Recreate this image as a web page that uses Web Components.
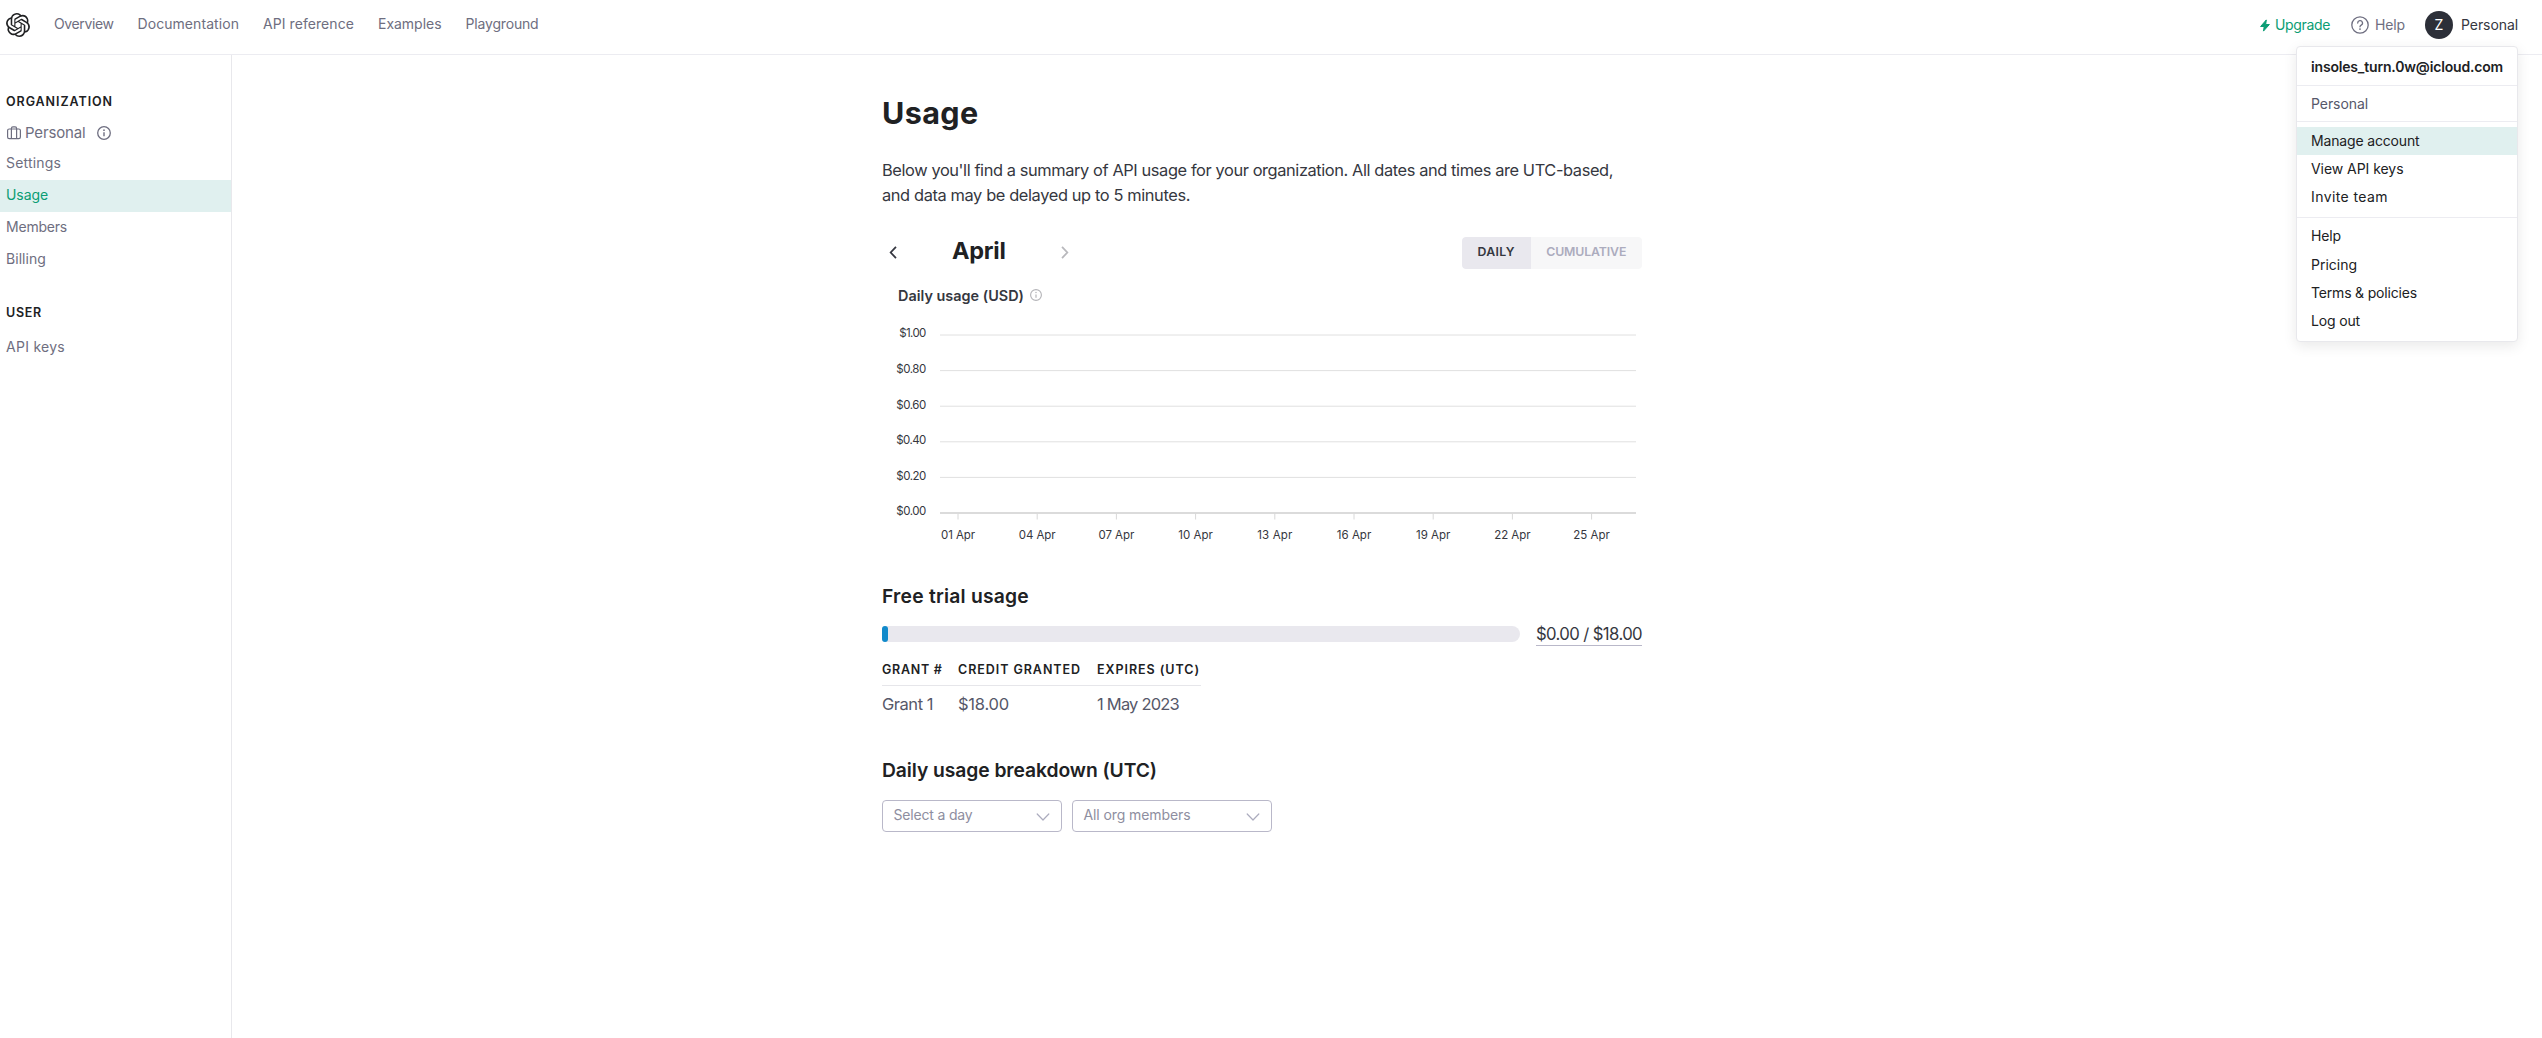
<!DOCTYPE html>
<html lang="en">
<head>
<meta charset="utf-8">
<title>Usage - OpenAI API</title>
<style>
html,body{margin:0;height:100%;overflow:hidden;background:#fff}
body{font-family:Inter,Roboto,"Liberation Sans",sans-serif;color:#353740}
</style>
</head>
<body>
<usage-app></usage-app>
<script>
function define(name, html, setup) {
  customElements.define(name, class extends HTMLElement {
    connectedCallback() {
      if (this.shadowRoot) return;
      const root = this.attachShadow({ mode: 'open' });
      root.innerHTML = html;
      if (setup) setup.call(this, root);
    }
  });
}

/* Text set to a given measure, in px, by tracking. */
define('fit-text', `<style>:host{display:inline-block;white-space:pre;flex:none}</style><slot></slot>`, function () {
  const w = parseFloat(this.getAttribute('w'));
  const n = this.textContent.length;
  this.style.width = 'max-content';
  const natural = this.getBoundingClientRect().width;
  this.style.letterSpacing = ((w - natural) / n).toFixed(4) + 'px';
  this.style.width = w + 'px';
});

const ICONS = {
  logo: ['0 0 24 24', '<path fill="#202123" d="M22.2819 9.8211a5.9847 5.9847 0 0 0-.5157-4.9108 6.0462 6.0462 0 0 0-6.5098-2.9A6.0651 6.0651 0 0 0 4.9807 4.1818a5.9847 5.9847 0 0 0-3.9977 2.9 6.0462 6.0462 0 0 0 .7427 7.0966 5.98 5.98 0 0 0 .511 4.9107 6.051 6.051 0 0 0 6.5146 2.9001A5.9847 5.9847 0 0 0 13.2599 24a6.0557 6.0557 0 0 0 5.7718-4.2058 5.9894 5.9894 0 0 0 3.9977-2.9001 6.0557 6.0557 0 0 0-.7475-7.0729zm-9.022 12.6081a4.4755 4.4755 0 0 1-2.8764-1.0408l.1419-.0804 4.7783-2.7582a.7948.7948 0 0 0 .3927-.6813v-6.7369l2.02 1.1686a.071.071 0 0 1 .038.052v5.5826a4.504 4.504 0 0 1-4.4945 4.4944zm-9.6607-4.1254a4.4708 4.4708 0 0 1-.5346-3.0137l.142.0852 4.783 2.7582a.7712.7712 0 0 0 .7806 0l5.8428-3.3685v2.3324a.0804.0804 0 0 1-.0332.0615L9.74 19.9502a4.4992 4.4992 0 0 1-6.1408-1.6464zM2.3408 7.8956a4.485 4.485 0 0 1 2.3655-1.9728V11.6a.7664.7664 0 0 0 .3879.6765l5.8144 3.3543-2.0201 1.1685a.0757.0757 0 0 1-.071 0l-4.8303-2.7865A4.504 4.504 0 0 1 2.3408 7.872zm16.5963 3.8558L13.1038 8.364 15.1192 7.2a.0757.0757 0 0 1 .071 0l4.8303 2.7913a4.4944 4.4944 0 0 1-.6765 8.1042v-5.6772a.79.79 0 0 0-.407-.667zm2.0107-3.0231l-.142-.0852-4.7735-2.7818a.7759.7759 0 0 0-.7854 0L9.409 9.2297V6.8974a.0662.0662 0 0 1 .0284-.0615l4.8303-2.7866a4.4992 4.4992 0 0 1 6.6802 4.66zM8.3065 12.863l-2.02-1.1638a.0804.0804 0 0 1-.038-.0567V6.0742a4.4992 4.4992 0 0 1 7.3757-3.4537l-.142.0805L8.704 5.459a.7948.7948 0 0 0-.3927.6813zm1.0976-2.3654l2.602-1.4998 2.6069 1.4998v2.9994l-2.5974 1.4997-2.6067-1.4997Z"/>'],
  bolt: ['0 0 10 13', '<path fill="currentColor" stroke="currentColor" stroke-width="1" stroke-linejoin="round" d="M6.3.9 .6 7.5H4.2L3.5 12.1 9.4 5.5H5.7Z"/>'],
  help: ['0 0 18 18', '<g fill="none" stroke="currentColor" stroke-width="1.3" stroke-linecap="round"><circle cx="9" cy="9" r="8.2"/><path d="M6.7 7.1a2.4 2.4 0 1 1 3.5 2.1c-.8.4-1.2.8-1.2 1.6"/></g><circle cx="9" cy="13.1" r=".9" fill="currentColor"/>'],
  info: ['0 0 14 14', '<circle cx="7" cy="7" r="6.3" fill="none" stroke="currentColor" stroke-width="1.3"/><path d="M7 6.3v4" stroke="currentColor" stroke-width="1.4"/><circle cx="7" cy="4.2" r=".85" fill="currentColor"/>'],
  brief: ['0 0 14 14', '<g fill="none" stroke="currentColor" stroke-width="1.2"><rect x=".6" y="3" width="12.8" height="9.7" rx="1.6"/><path d="M4.4 12.7V2.4a1.5 1.5 0 0 1 1.5-1.5h2.2a1.5 1.5 0 0 1 1.5 1.5V12.7"/></g>'],
  left: ['0 0 8 14', '<path fill="none" stroke="currentColor" stroke-width="1.9" d="M7.2 1 1.5 7l5.7 6"/>'],
  right: ['0 0 8 14', '<path fill="none" stroke="currentColor" stroke-width="1.9" d="M.8 1 6.5 7 .8 13"/>'],
  down: ['0 0 14 8', '<path fill="none" stroke="currentColor" stroke-width="1.2" stroke-linecap="round" stroke-linejoin="round" d="M1.2 1 7 7l5.8-6"/>']
};
define('ui-icon', `<style>:host{display:block;flex:none}svg{display:block;width:100%;height:100%;overflow:visible}</style>`, function (root) {
  const [box, body] = ICONS[this.getAttribute('name')];
  root.innerHTML += `<svg viewBox="${box}">${body}</svg>`;
  this.style.width = this.getAttribute('width') + 'px';
  this.style.height = this.getAttribute('height') + 'px';
});

define('top-nav', `<style>
:host{display:flex;box-sizing:border-box;height:55px;border-bottom:1px solid #ececf1;font-size:14px;color:#6e6e80;padding:0 24px 0 6px;align-items:flex-start}
nav{display:flex;gap:24px;margin:14px 0 0 24px;line-height:20px}
.logo{margin-top:13px}
.right{margin-left:auto;display:flex;align-items:center;height:50px;line-height:20px}
.up{color:#0b9d74;display:flex;align-items:center;gap:5px}
.help{display:flex;align-items:center;gap:6px;margin-left:21px}
.user{display:flex;align-items:center;gap:8px;margin-left:20px;color:#353740}
.av{width:28px;height:28px;border-radius:50%;background:#2c2f38;color:#fff;text-align:center;line-height:27px}
</style>
<ui-icon class="logo" name="logo" width="24" height="24"></ui-icon>
<nav><fit-text w="59.5">Overview</fit-text><fit-text w="101.5">Documentation</fit-text><fit-text w="91">API reference</fit-text><fit-text w="63.5">Examples</fit-text><fit-text w="73">Playground</fit-text></nav>
<div class="right">
<div class="up"><ui-icon name="bolt" width="10" height="13"></ui-icon><fit-text w="55">Upgrade</fit-text></div>
<div class="help"><ui-icon name="help" width="18" height="18"></ui-icon><fit-text w="30">Help</fit-text></div>
<div class="user"><div class="av">Z</div><fit-text w="57">Personal</fit-text></div>
</div>`);

define('side-item', `<style>
:host{display:flex;box-sizing:border-box;align-items:center;height:32px;padding:0 0 2px 6px;font-size:14px;line-height:20px;color:#6e6e80}
:host([active]){background:#e0f0ef;color:#0b9d74}
</style><slot></slot>`);

define('side-heading', `<style>:host{display:block;padding-left:6px;font-size:12.5px;font-weight:600;line-height:20px;color:#202123}</style><slot></slot>`);

define('side-bar', `<style>
:host{display:block;box-sizing:border-box;width:232px;border-right:1px solid #e8e8ec;padding-top:37px;flex:none}
.org{display:flex;align-items:center;height:22px;margin-top:10px;padding-left:6.5px;font-size:15px;line-height:22px;color:#6e6e80}
.org .n{margin-left:4.5px}
.org .i{margin-left:11px}
.list{margin-top:4px}
.u{margin-top:27px}
.k{margin-top:9px}
</style>
<side-heading><fit-text w="107">ORGANIZATION</fit-text></side-heading>
<div class="org"><ui-icon name="brief" width="14" height="14"></ui-icon><fit-text class="n" w="60.5">Personal</fit-text><ui-icon class="i" name="info" width="14" height="14"></ui-icon></div>
<div class="list">
<side-item><fit-text w="55">Settings</fit-text></side-item>
<side-item active><fit-text w="42">Usage</fit-text></side-item>
<side-item><fit-text w="61">Members</fit-text></side-item>
<side-item><fit-text w="40">Billing</fit-text></side-item>
</div>
<side-heading class="u"><fit-text w="36">USER</fit-text></side-heading>
<side-item class="k"><fit-text w="59">API keys</fit-text></side-item>`);

define('usage-chart', `<style>
:host{display:block;height:250px}
svg{display:block;overflow:visible}
text{font-family:Inter,Roboto,sans-serif;font-size:11.5px;fill:#353740}
</style>`, function (root) {
  let s = '';
  ['$1.00', '$0.80', '$0.60', '$0.40', '$0.20', '$0.00'].forEach((t, i) => {
    const y = 29 + i * 35.6;
    const w = i ? 30 : 27;
    s += `<line x1="58" x2="754" y1="${y}" y2="${y}" stroke="${i == 5 ? '#cfcfcf' : '#e0e0e0'}" stroke-width="${i == 5 ? 1.4 : 1}"/>`;
    s += `<text x="${44.3 - w}" y="${y + 2.3}" textLength="${w}">${t}</text>`;
  });
  [['01', 34], ['04', 37], ['07', 36], ['10', 34.5], ['13', 35], ['16', 34.5], ['19', 34.5], ['22', 36.5], ['25', 36.5]].forEach(([d, w], i) => {
    const x = 76 + i * 79.2;
    s += `<line x1="${x}" x2="${x}" y1="207.5" y2="213.5" stroke="#d8d8d8"/>`;
    s += `<text x="${x - w / 2}" y="232.5" textLength="${w}">${d} Apr</text>`;
  });
  root.innerHTML += `<svg width="760" height="250">${s}</svg>`;
});

define('mode-toggle', `<style>
:host{display:flex;width:180px;height:32px;border-radius:4px;overflow:hidden;background:#f7f7f8;font-size:12.3px;font-weight:600;line-height:29px;color:#acacbe}
.on{width:68.5px;background:#e9e8ee;color:#353740;border-radius:4px 0 0 4px;text-align:center}
.off{flex:1;text-align:center}
</style><div class="on"><fit-text w="37.5">DAILY</fit-text></div><div class="off"><fit-text w="80">CUMULATIVE</fit-text></div>`);

define('select-box', `<style>
:host{display:flex;box-sizing:border-box;height:32px;border:1px solid #b9b8c9;border-radius:4px;align-items:center;justify-content:space-between;padding:0 11.5px 2px 10.5px;font-size:14px;line-height:20px;color:#8e8ea0}
ui-icon{margin-top:3px;color:#acacbe}
</style><slot></slot><ui-icon name="down" width="14" height="8"></ui-icon>`);

define('grant-table', `<style>
:host{display:block;width:319px;margin-top:14px}
.r{display:grid;grid-template-columns:76px 139px 104px}
.h{height:25px;border-bottom:1px solid #e6e6ea;font-size:12.5px;font-weight:600;line-height:20px;color:#202123}
.b{padding-top:6px;font-size:16.5px;line-height:24px;color:#565869}
</style>
<div class="r h"><fit-text w="60.5">GRANT #</fit-text><fit-text w="123">CREDIT GRANTED</fit-text><fit-text w="103">EXPIRES (UTC)</fit-text></div>
<div class="r b"><fit-text w="51">Grant 1</fit-text><fit-text w="51">$18.00</fit-text><fit-text w="82">1 May 2023</fit-text></div>`);

define('usage-main', `<style>
:host{display:block;width:760px;padding:38px 0 0 650px}
h1,h2,p{margin:0}
h1{font-size:30.5px;line-height:40px;font-weight:700;color:#202123}
p{margin-top:25px;font-size:16.4px;line-height:25px}
p fit-text{display:block}
.bar{display:flex;align-items:center;margin-top:29px;height:32px}
.m{font-size:23.5px;font-weight:700;line-height:32px;color:#202123;margin:-3px 55px 2px 55px}
.tog{margin-left:auto}
.ct{display:flex;align-items:center;gap:6px;margin-top:17px;padding-left:16px;font-size:14.4px;font-weight:600;line-height:20px}
h2{font-size:19.3px;line-height:26px;font-weight:600;color:#202123;margin-top:27px}
.trial{display:flex;gap:16px;height:22px;margin-top:15px}
.track{flex:1;height:16px;margin-top:2px;border-radius:4px 8px 8px 4px;background:#e9e8ee}
.fill{width:6px;height:16px;border-radius:3px;background:#118acb}
.amt{font-size:16.7px;line-height:21px;height:21px;border-bottom:1px solid #b9b8c9}
.s{display:flex;gap:10px;margin-top:17px}
</style>
<h1><fit-text w="96.5">Usage</fit-text></h1>
<p><fit-text w="731">Below you'll find a summary of API usage for your organization. All dates and times are UTC-based,</fit-text><fit-text w="308">and data may be delayed up to 5 minutes.</fit-text></p>
<div class="bar"><ui-icon name="left" width="8" height="13" style="margin:-1px 0 0 7px"></ui-icon><div class="m"><fit-text w="53.5">April</fit-text></div><ui-icon name="right" width="8" height="13" style="color:#b8b8bc;margin-top:-1px"></ui-icon><mode-toggle class="tog"></mode-toggle></div>
<div class="ct"><fit-text w="126">Daily usage (USD)</fit-text><ui-icon name="info" width="12" height="12" style="color:#b4b4b8;margin-top:-2px"></ui-icon></div>
<usage-chart></usage-chart>
<h2><fit-text w="147">Free trial usage</fit-text></h2>
<div class="trial"><div class="track"><div class="fill"></div></div><div class="amt"><fit-text w="106">$0.00 / $18.00</fit-text></div></div>
<grant-table></grant-table>
<h2 style="margin-top:41px"><fit-text w="275">Daily usage breakdown (UTC)</fit-text></h2>
<div class="s"><select-box style="width:180px"><fit-text w="79">Select a day</fit-text></select-box><select-box style="width:200px"><fit-text w="107">All org members</fit-text></select-box></div>`);

define('menu-item', `<style>
:host{display:block;height:28px;line-height:28px;padding-left:14px}
:host([active]){background:#e0f0ef}
</style><slot></slot>`);

define('user-menu', `<style>
:host{display:block;position:absolute;z-index:2;top:46px;left:2296px;width:222px;height:296px;box-sizing:border-box;border:1px solid #e8e8ec;border-radius:4px;background:#fff;box-shadow:0 4px 14px rgba(0,0,0,.09);font-size:14px;color:#202123}
.mail{height:38px;line-height:39px;padding-left:14px;font-weight:600;border-bottom:1px solid #ececf1}
.org{height:35px;line-height:35px;padding-left:14px;color:#565869;border-bottom:1px solid #ececf1}
.g{padding:5px 0 6px;border-bottom:1px solid #ececf1}
.l{padding-top:4px}
</style>
<div class="mail"><fit-text w="192">insoles_turn.0w@icloud.com</fit-text></div>
<div class="org"><fit-text w="57">Personal</fit-text></div>
<div class="g"><menu-item active><fit-text w="108.5">Manage account</fit-text></menu-item><menu-item><fit-text w="92.5">View API keys</fit-text></menu-item><menu-item><fit-text w="77">Invite team</fit-text></menu-item></div>
<div class="l"><menu-item style="margin-bottom:1px"><fit-text w="30">Help</fit-text></menu-item><menu-item><fit-text w="46">Pricing</fit-text></menu-item><menu-item><fit-text w="106">Terms &amp; policies</fit-text></menu-item><menu-item><fit-text w="49">Log out</fit-text></menu-item></div>`);

define('usage-app', `<style>
:host{display:flex;flex-direction:column;height:100vh;position:relative}
.body{display:flex;flex:1}
</style><top-nav></top-nav><div class="body"><side-bar></side-bar><usage-main></usage-main></div><user-menu></user-menu>`);
</script>
</body>
</html>
